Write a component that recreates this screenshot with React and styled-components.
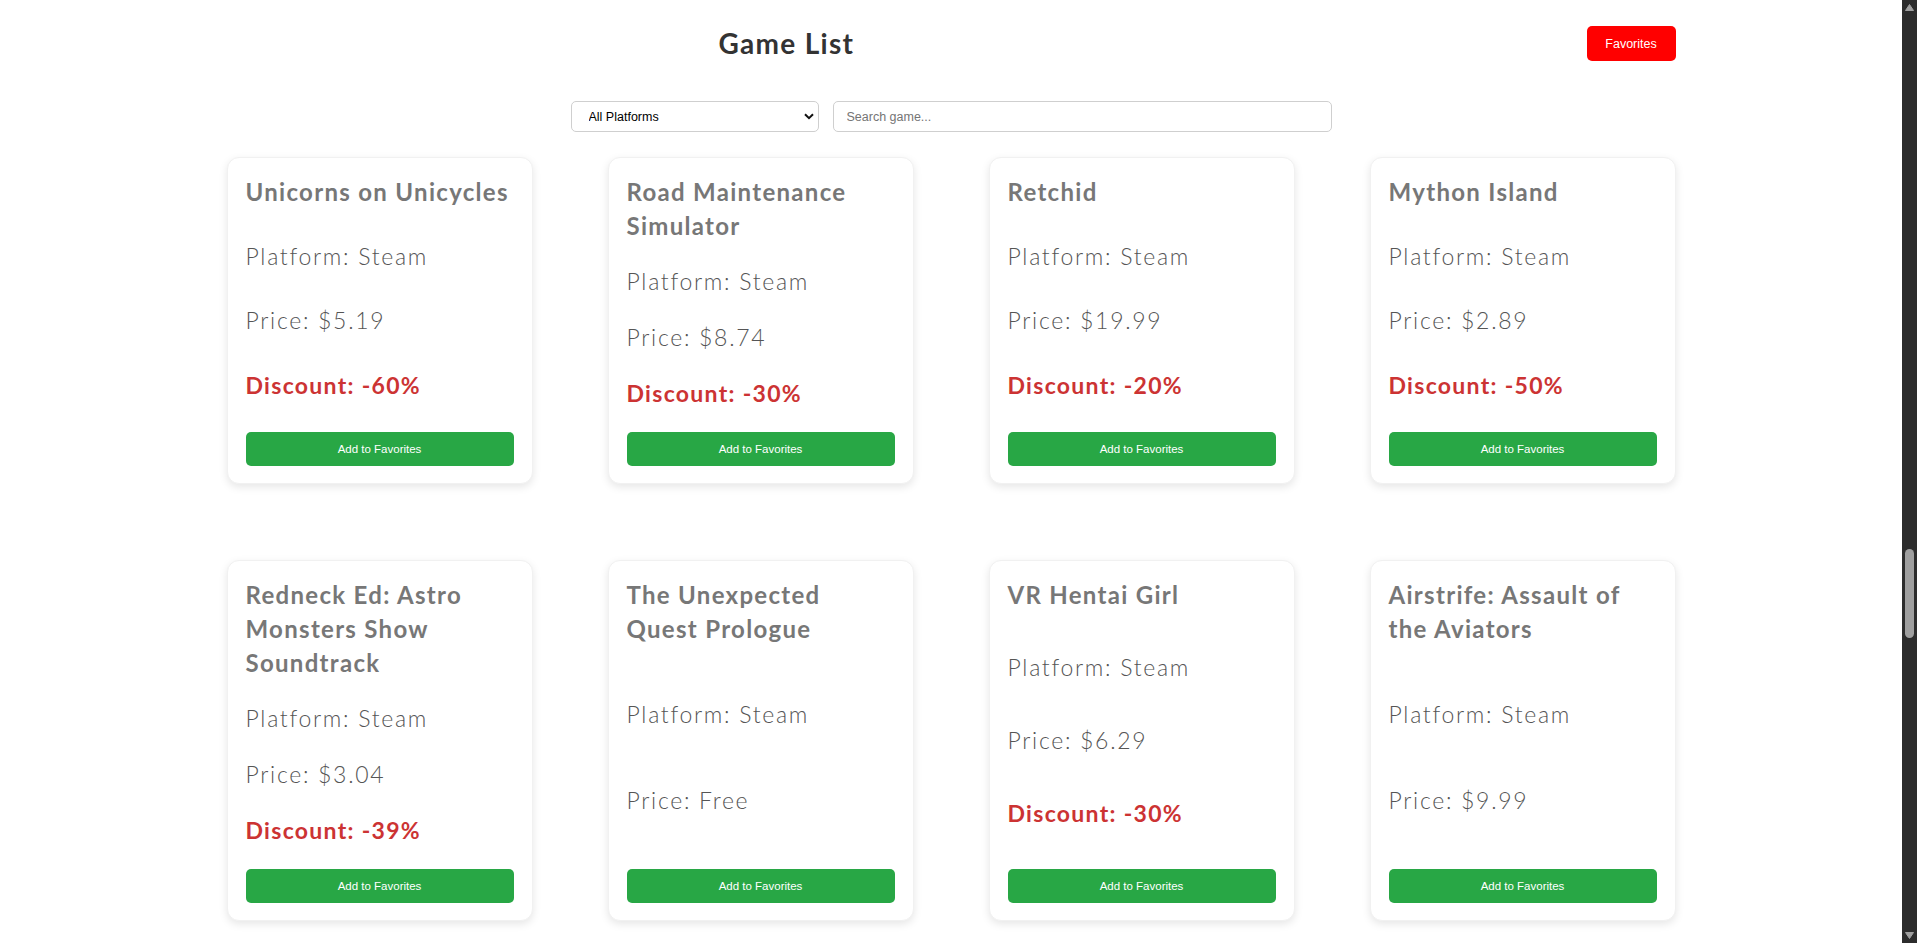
import React from "react";
import styled, { createGlobalStyle } from "styled-components";

const GlobalStyle = createGlobalStyle`
  html, body {
    margin: 0;
    padding: 0;
    height: 100%;
    overflow: hidden;
    background: #ffffff;
  }
  #root { height: 100%; }
  * { box-sizing: border-box; }
`;

const Shell = styled.div`
  display: flex;
  height: 100vh;
  font-family: "Lato", "Open Sans", sans-serif;
`;

const Content = styled.div`
  flex: 1;
  min-width: 0;
  overflow: hidden;
`;

/* Browser scrollbar look-alike (dark theme) */
const Rail = styled.div`
  width: 15px;
  flex-shrink: 0;
  background: #2c2c2c;
  display: flex;
  flex-direction: column;
  align-items: center;
`;

const RailArrow = styled.svg`
  display: block;
  flex-shrink: 0;
`;

const RailTrack = styled.div`
  flex: 1;
  display: flex;
  flex-direction: column;
  align-items: center;
`;

const RailThumb = styled.div`
  width: 9px;
  height: 89px;
  margin-top: ${(p) => p.$offset}px;
  border-radius: 5px;
  background: #9f9f9f;
`;

const Header = styled.header`
  background: #ffffff;
  padding: 26px 0 12px;
`;

const TopBar = styled.div`
  width: 1449px;
  margin: 0 auto;
  display: flex;
  align-items: center;
  height: 35px;
`;

const Title = styled.h1`
  margin: 0 0 0 492px;
  font-family: "Lato", sans-serif;
  font-weight: 700;
  font-size: 28px;
  letter-spacing: 1.3px;
  color: #333333;
  line-height: 35px;
`;

const FavButton = styled.button`
  margin-left: auto;
  width: 89px;
  height: 35px;
  border: none;
  border-radius: 5px;
  background: #ff0000;
  color: #ffffff;
  font-family: "Liberation Sans", Arial, sans-serif;
  font-size: 12.5px;
  cursor: pointer;
`;

const Filters = styled.div`
  display: flex;
  justify-content: center;
  gap: 14px;
  margin-top: 40px;
`;

const SelectWrap = styled.div`
  position: relative;
  width: 248px;
  height: 31px;
`;

const Select = styled.select`
  appearance: none;
  width: 100%;
  height: 100%;
  padding: 0 24px 0 17px;
  border: 1px solid #cfcfcf;
  border-radius: 5px;
  background: #ffffff;
  font-family: "Liberation Sans", Arial, sans-serif;
  font-size: 12.5px;
  color: #000000;
  outline: none;
`;

const Chevron = styled.svg`
  position: absolute;
  right: 5px;
  top: 12px;
  pointer-events: none;
`;

const SearchInput = styled.input`
  width: 499px;
  height: 31px;
  padding: 0 13px;
  border: 1px solid #cfcfcf;
  border-radius: 5px;
  font-family: "Liberation Sans", Arial, sans-serif;
  font-size: 12.5px;
  color: #000;
  outline: none;
  &::placeholder { color: #757575; }
`;

const Grid = styled.main`
  width: 1449px;
  margin: 13px auto 0;
  display: grid;
  grid-template-columns: repeat(4, 306px);
  column-gap: 75px;
  row-gap: 76px;
`;

const Card = styled.article`
  display: flex;
  flex-direction: column;
  justify-content: space-between;
  gap: 21px;
  padding: 17px 18px 17px;
  border: 1px solid #f1f1f1;
  border-radius: 12px;
  background: #ffffff;
  box-shadow: 0 3px 8px rgba(0, 0, 0, 0.1);
`;

const GameTitle = styled.h3`
  margin: 0;
  font-family: "Lato", sans-serif;
  font-weight: 700;
  font-size: 24px;
  line-height: 34px;
  letter-spacing: 1.3px;
  color: #777777;
`;

const Info = styled.p`
  margin: 0;
  font-family: "Lato", sans-serif;
  font-weight: 300;
  font-size: 23px;
  line-height: 35px;
  letter-spacing: 1.7px;
  color: #555555;
`;

const Discount = styled(Info)`
  font-weight: 700;
  color: #cc3333;
  letter-spacing: 1.3px;
`;

const AddButton = styled.button`
  height: 34px;
  width: 100%;
  border: none;
  border-radius: 5px;
  background: #28a745;
  color: #ffffff;
  font-family: "Liberation Sans", Arial, sans-serif;
  font-size: 11.5px;
  cursor: pointer;
`;

const games = [
  { id: 1, title: "Unicorns on Unicycles", price: "$5.19", discount: "-60%" },
  { id: 2, title: "Road Maintenance Simulator", price: "$8.74", discount: "-30%" },
  { id: 3, title: "Retchid", price: "$19.99", discount: "-20%" },
  { id: 4, title: "Mython Island", price: "$2.89", discount: "-50%" },
  { id: 5, title: "Redneck Ed: Astro Monsters Show Soundtrack", price: "$3.04", discount: "-39%" },
  { id: 6, title: "The Unexpected Quest Prologue", price: "Free", discount: null },
  { id: 7, title: "VR Hentai Girl", price: "$6.29", discount: "-30%" },
  { id: 8, title: "Airstrife: Assault of the Aviators", price: "$9.99", discount: null },
];

function GameCard({ game }) {
  return (
    <Card>
      <GameTitle>{game.title}</GameTitle>
      <Info>Platform: Steam</Info>
      <Info>Price: {game.price}</Info>
      {game.discount && <Discount>Discount: {game.discount}</Discount>}
      <AddButton>Add to Favorites</AddButton>
    </Card>
  );
}

function ScrollRail() {
  return (
    <Rail>
      <RailArrow width="15" height="15" viewBox="0 0 15 15">
        <path d="M3.5 10.5 L7.5 4.5 L11.5 10.5 Z" fill="#9f9f9f" stroke="#9f9f9f" strokeWidth="1" strokeLinejoin="round" />
      </RailArrow>
      <RailTrack>
        <RailThumb $offset={534} />
      </RailTrack>
      <RailArrow width="15" height="15" viewBox="0 0 15 15">
        <path d="M3.5 4.5 L7.5 10.5 L11.5 4.5 Z" fill="#9f9f9f" stroke="#9f9f9f" strokeWidth="1" strokeLinejoin="round" />
      </RailArrow>
    </Rail>
  );
}

export default function App() {
  return (
    <>
      <GlobalStyle />
      <Shell>
        <Content>
          <Header>
            <TopBar>
              <Title>Game List</Title>
              <FavButton>Favorites</FavButton>
            </TopBar>
            <Filters>
              <SelectWrap>
                <Select defaultValue="all">
                  <option value="all">All Platforms</option>
                  <option value="steam">Steam</option>
                  <option value="epic">Epic Games</option>
                  <option value="gog">GOG</option>
                </Select>
                <Chevron width="10" height="7" viewBox="0 0 10 7">
                  <path d="M1 1.2 L5 5.2 L9 1.2" fill="none" stroke="#111" strokeWidth="2" />
                </Chevron>
              </SelectWrap>
              <SearchInput placeholder="Search game..." />
            </Filters>
          </Header>
          <Grid>
            {games.map((g) => (
              <GameCard key={g.id} game={g} />
            ))}
          </Grid>
        </Content>
        <ScrollRail />
      </Shell>
    </>
  );
}
